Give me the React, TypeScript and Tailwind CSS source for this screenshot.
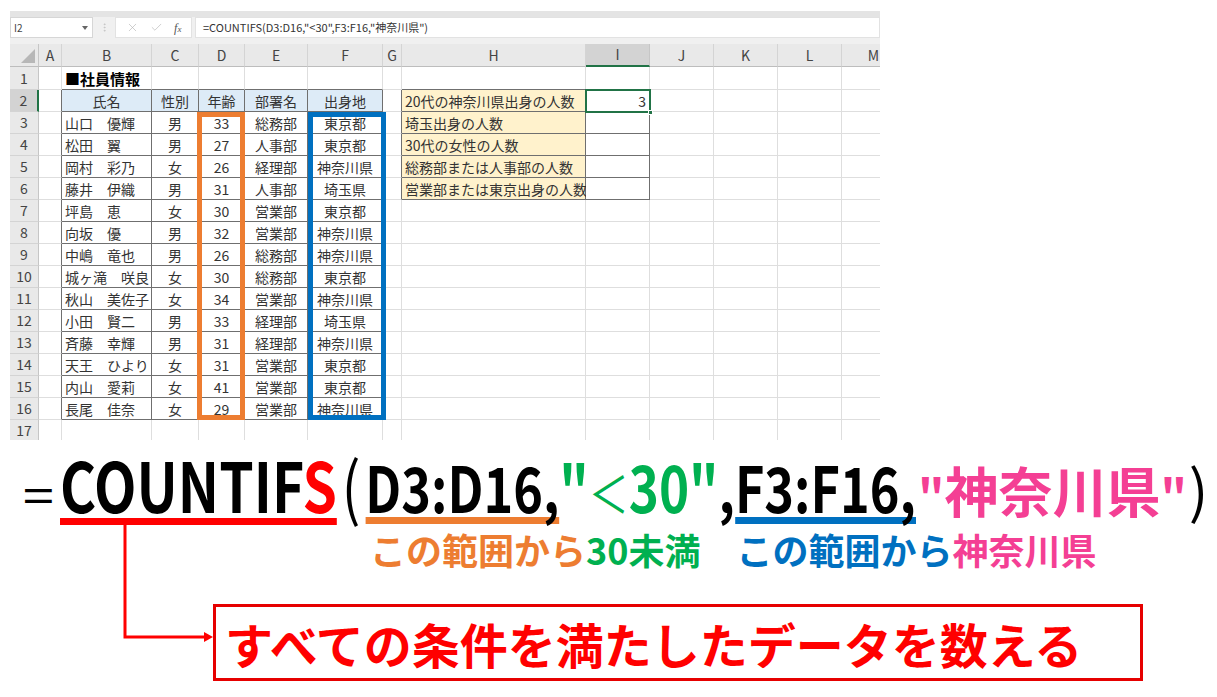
import { Check, EllipsisVertical, X } from "lucide-react";

const jp = "font-['Noto_Sans_CJK_JP','Noto_Sans',sans-serif]";

const colLetters = ["", "A", "B", "C", "D", "E", "F", "G", "H", "I", "J", "K", "L", "M"];

const headers = ["氏名", "性別", "年齢", "部署名", "出身地"];

const staff = [
    ["山口　優輝", "男", "33", "総務部", "東京都"],
    ["松田　翼", "男", "27", "人事部", "東京都"],
    ["岡村　彩乃", "女", "26", "経理部", "神奈川県"],
    ["藤井　伊織", "男", "31", "人事部", "埼玉県"],
    ["坪島　恵", "女", "30", "営業部", "東京都"],
    ["向坂　優", "男", "32", "営業部", "神奈川県"],
    ["中嶋　竜也", "男", "26", "総務部", "神奈川県"],
    ["城ヶ滝　咲良", "女", "30", "総務部", "東京都"],
    ["秋山　美佐子", "女", "34", "営業部", "神奈川県"],
    ["小田　賢二", "男", "33", "経理部", "埼玉県"],
    ["斉藤　幸輝", "男", "31", "経理部", "神奈川県"],
    ["天王　ひより", "女", "31", "営業部", "東京都"],
    ["内山　愛莉", "女", "41", "営業部", "東京都"],
    ["長尾　佳奈", "女", "29", "営業部", "神奈川県"],
];

const questions = [
    ["20代の神奈川県出身の人数", "3"],
    ["埼玉出身の人数", ""],
    ["30代の女性の人数", ""],
    ["総務部または人事部の人数", ""],
    ["営業部または東京出身の人数", ""],
];

const inMain = (r: number, c: number) => r >= 2 && r <= 16 && c >= 2 && c <= 6;
const inSide = (r: number, c: number) => r >= 2 && r <= 6 && (c === 8 || c === 9);
const inTable = (r: number, c: number) => inMain(r, c) || inSide(r, c);

function cellText(r: number, c: number) {
    if (r === 1 && c === 2) return "■社員情報";
    if (r === 2 && c >= 2 && c <= 6) return headers[c - 2];
    if (r >= 3 && r <= 16 && c >= 2 && c <= 6) return staff[r - 3][c - 2];
    if (r >= 2 && r <= 6 && c === 8) return questions[r - 2][0];
    if (r >= 2 && r <= 6 && c === 9) return questions[r - 2][1];
    return "";
}

const Cell = ({ r, c }: { r: number; c: number }) => {
    const right = inTable(r, c) || inTable(r, c + 1) ? "border-r-[#6f6f6f]" : "border-r-[#dedede]";
    const bottom = inTable(r, c) || inTable(r + 1, c) ? "border-b-[#6f6f6f]" : "border-b-[#dedede]";
    let fill = "bg-white";
    if (r === 2 && c >= 2 && c <= 6) fill = "bg-[#ddebf7]";
    if (r >= 2 && r <= 6 && c === 8) fill = "bg-[#fff2cc]";
    let align = "justify-center";
    if (c === 2 && r !== 2) align = "justify-start";
    if (c === 8) align = "justify-start";
    if (c === 9) align = "justify-end";
    const look = r === 1 ? "font-bold text-black text-[15px]" : "text-[#333] text-[14px]";
    return (
        <div
            className={`flex items-center overflow-visible whitespace-nowrap border-r border-b px-[3px] leading-none ${right} ${bottom} ${fill} ${align} ${look}`}
        >
            {cellText(r, c)}
        </div>
    );
};

const Sheet = () => {
    const rows = Array.from({ length: 17 }, (_, i) => i + 1);
    return (
        <div className="relative grid grid-cols-[29px_23px_90px_47px_46px_63px_75px_19px_184px_64px_64px_64px_64px_64px] grid-rows-[23px_23px_repeat(16,22px)]">
            {/* column header row */}
            <div className="relative border-r border-b border-r-[#c6c6c6] border-b-[#bdbdbd] bg-[#e9e9e9]">
                <svg className="absolute right-[3px] bottom-[3px]" width="14" height="14" viewBox="0 0 14 14">
                    <polygon points="14,0 14,14 0,14" fill="#b7b7b7" />
                </svg>
            </div>
            {colLetters.slice(1).map((l) =>
                l === "I" ? (
                    <div
                        key={l}
                        className="flex items-center justify-center border-r border-b-2 border-r-[#c6c6c6] border-b-[#217346] bg-[#d3d3d3] text-[14px] text-[#444]"
                    >
                        {l}
                    </div>
                ) : (
                    <div
                        key={l}
                        className="flex items-center justify-center border-r border-b border-r-[#d4d4d4] border-b-[#bdbdbd] bg-[#e9e9e9] text-[14px] text-[#444]"
                    >
                        {l}
                    </div>
                )
            )}

            {rows.map((r) => (
                <div key={r} className="contents">
                    {r === 2 ? (
                        <div className="flex items-center justify-center border-r-2 border-b border-r-[#217346] border-b-[#d4d4d4] bg-[#d3d3d3] text-[14px] text-[#444]">
                            {r}
                        </div>
                    ) : (
                        <div className="flex items-center justify-center border-r border-b border-r-[#c6c6c6] border-b-[#d4d4d4] bg-[#e9e9e9] text-[14px] text-[#444]">
                            {r}
                        </div>
                    )}
                    {colLetters.slice(1).map((_, i) => (
                        <Cell key={i} r={r} c={i + 1} />
                    ))}
                </div>
            ))}

            {/* selected cell I2 */}
            <div className="pointer-events-none absolute top-[45px] left-[575px] h-[24px] w-[66px] border-2 border-[#217346]">
                <div className="absolute -right-[4px] -bottom-[4px] h-[5px] w-[5px] border border-white bg-[#217346]" />
            </div>
            {/* range highlights */}
            <div className="pointer-events-none absolute top-[68px] left-[187px] h-[308px] w-[48px] border-[5px] border-[#ed7d31]" />
            <div className="pointer-events-none absolute top-[68px] left-[298px] h-[308px] w-[78px] border-[5px] border-[#0070c0]" />
        </div>
    );
};

const FormulaBar = () => (
    <div className="flex h-[21px] items-stretch">
        <div className="flex w-[83px] items-center justify-between border border-[#d6d6d6] bg-white pr-[4px] pl-[3px] text-[10px] text-[#444]">
            <span>I2</span>
            <svg width="6" height="4" viewBox="0 0 6 4">
                <polygon points="0,0 6,0 3,4" fill="#666" />
            </svg>
        </div>
        <div className="flex w-[22px] items-center justify-center text-[#c4c4c4]">
            <EllipsisVertical size={11} />
        </div>
        <div className="flex w-[77px] items-center justify-around border border-[#e2e2e2] bg-white px-[4px] text-[#b5b5b5]">
            <X size={13} strokeWidth={1.2} />
            <Check size={13} strokeWidth={1.2} />
            <span className="font-['Liberation_Serif',serif] text-[12px] text-[#555] italic">
                f<span className="text-[9px]">x</span>
            </span>
        </div>
        <div className="ml-[3px] flex flex-1 items-center border border-[#e2e2e2] bg-white pl-[7px] text-[11px] text-[#333]">
            =COUNTIFS(D3:D16,"&lt;30",F3:F16,"神奈川県")
        </div>
    </div>
);

const Explanation = () => (
    <section className="relative h-[257px]">
        {/* formula: the latin part is squeezed to look like a narrow face */}
        <div className="flex items-baseline whitespace-nowrap pt-[9px] pl-[20px] leading-none font-bold text-black">
            <div className="w-[898px] shrink-0">
                <div className="flex origin-left scale-x-[0.8] items-baseline text-[69px]">
                    <span className="mr-[4px] text-[46px] font-normal">＝</span>
                    <span className="border-b-[7px] border-[#ff0000]">
                        COUNTIF<span className="text-[#ff0000]">S</span>
                    </span>
                    <span className="mx-[6px] font-normal">(</span>
                    <span className="border-b-[7px] border-[#ed7d31] text-[63px]">D3:D16,</span>
                    <span className="text-[64px] text-[#00b050]">
                        "<span className="text-[50px] font-normal">＜</span>30"
                    </span>
                    <span className="text-[63px]">,</span>
                    <span className="border-b-[7px] border-[#0070c0] text-[63px]">F3:F16,</span>
                </div>
            </div>
            <span className="text-[#f43f94]">
                <span className="text-[46px]">"</span>
                <span className="text-[54px]">神奈川県</span>
                <span className="text-[46px]">"</span>
            </span>
            <span className="ml-[2px] text-[58px] font-normal">)</span>
        </div>

        {/* captions */}
        <div className="mt-[6px] flex whitespace-nowrap pl-[370px] text-[36px] leading-none font-bold">
            <span className="text-[#ed7d31]">この範囲から</span>
            <span className="text-[#00b050]">30未満</span>
            <span className="ml-[36px] text-[#0070c0]">この範囲から</span>
            <span className="text-[#f43f94]">神奈川県</span>
        </div>

        {/* result box */}
        <div className="mt-[37px] ml-[213px] flex h-[77px] w-[930px] items-center border-[3px] border-[#e60000] pl-[9px]">
            <span className="whitespace-nowrap text-[48px] leading-none font-bold text-[#ff0000]">
                すべての条件を満たしたデータを数える
            </span>
        </div>

        {/* connector */}
        <svg className="pointer-events-none absolute top-0 left-0" width="260" height="257">
            <polyline points="125,81 125,197 206,197" fill="none" stroke="#ff0000" strokeWidth="3" />
            <polygon points="204,192 213,197 204,202" fill="#ff0000" />
        </svg>
    </section>
);

export default function App() {
    return (
        <div className={`h-[697px] w-[1217px] overflow-hidden bg-white ${jp}`}>
            <div className="pt-[11px] pl-[10px]">
                <div className="h-[429px] w-[870px] overflow-hidden bg-[#f0f0f0]">
                    <div className="h-[6px] bg-[#e4e4e4]" />
                    <FormulaBar />
                    <div className="h-[6px]" />
                    <Sheet />
                </div>
            </div>
            <Explanation />
        </div>
    );
}
